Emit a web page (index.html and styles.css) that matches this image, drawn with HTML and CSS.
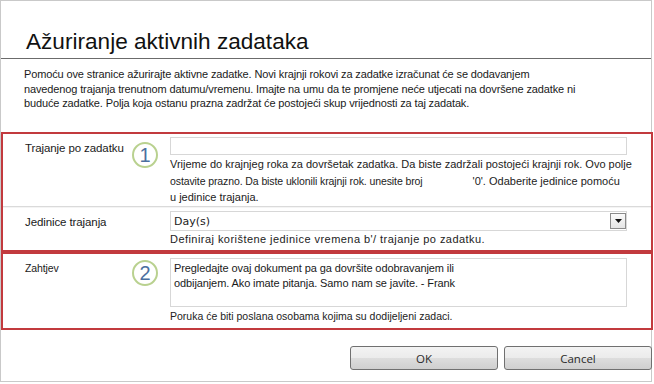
FILE: index.html
```html
<!DOCTYPE html>
<html>
<head>
<meta charset="utf-8">
<link rel="stylesheet" href="styles.css">
</head>
<body>
<div class="frame">
  <div class="header"><h1 class="title">Ažuriranje aktivnih zadataka</h1></div>
  <p class="intro">Pomoću ove stranice ažurirajte aktivne zadatke. Novi krajnji rokovi za zadatke izračunat će se dodavanjem<br>navedenog trajanja trenutnom datumu/vremenu. Imajte na umu da te promjene neće utjecati na dovršene zadatke ni<br>buduće zadatke. Polja koja ostanu prazna zadržat će postojeći skup vrijednosti za taj zadatak.</p>

  <div class="box box-one">
    <div class="row row-first">
      <div class="label">Trajanje po zadatku</div>
      <div class="badge"><span class="badge-num">1</span></div>
      <div class="field">
        <div class="input"></div>
        <div class="hint hint-multi">Vrijeme do krajnjeg roka za dovršetak zadatka. Da biste zadržali postojeći krajnji rok. Ovo polje<br><span class="small">ostavite prazno. Da biste uklonili krajnji rok. unesite broj</span><span class="gap"></span>'0'. Odaberite jedinice pomoću<br>u jedinice trajanja.</div>
      </div>
    </div>
    <div class="row row-second">
      <div class="label">Jedinice trajanja</div>
      <div class="badge"></div>
      <div class="field">
        <div class="select"><span class="select-text">Day(s)</span><span class="select-btn"><svg width="7" height="4" viewBox="0 0 7 4"><path d="M0 0H7L3.5 4Z" fill="#111"/></svg></span></div>
        <div class="hint hint-wide">Definiraj korištene jedinice vremena b'/ trajanje po zadatku.</div>
      </div>
    </div>
  </div>

  <div class="box box-two">
    <div class="row row-third">
      <div class="label label-small">Zahtjev</div>
      <div class="badge"><span class="badge-num">2</span></div>
      <div class="field">
        <div class="textarea">Pregledajte ovaj dokument pa ga dovršite odobravanjem ili<br>odbijanjem. Ako imate pitanja. Samo nam se javite. - Frank</div>
        <div class="hint hint-last">Poruka će biti poslana osobama kojima su dodijeljeni zadaci.</div>
      </div>
    </div>
  </div>

  <div class="buttons">
    <button class="btn btn-ok">OK</button>
    <button class="btn btn-cancel">Cancel</button>
  </div>
</div>
</body>
</html>
```

FILE: styles.css
```css
html, body {
  margin: 0;
  padding: 0;
  background: #ffffff;
}
body {
  width: 654px;
  height: 384px;
  overflow: hidden;
  font-family: "Liberation Sans", Arial, sans-serif;
  color: #1a1a1a;
}
.frame {
  width: 650px;
  height: 380px;
  border: 1px solid #c9c9c9;
  position: relative;
}
.header {
  border-bottom: 1px solid #6b6b6b;
  padding-left: 25px;
  box-sizing: border-box;
  height: 58px;
}
.title {
  margin: 0;
  padding-top: 27px;
  font-weight: normal;
  font-size: 22.6px;
  line-height: 28px;
  color: #111;
}
.intro {
  margin: 0;
  padding: 8px 0 0 23px;
  height: 64px;
  box-sizing: border-box;
  font-size: 11px;
  line-height: 14.5px;
  letter-spacing: -0.13px;
  color: #1a1a1a;
}
.box {
  width: 652px;
  box-sizing: border-box;
  border: 2px solid #c23a3e;
}
.box-one {
  margin-top: 9px;
}
.row {
  display: grid;
  grid-template-columns: 107px 60px 1fr;
}
.row-first {
  height: 73px;
  padding-top: 3px;
  box-sizing: border-box;
  border-bottom: 1px solid #dadada;
  box-shadow: 0 1px 0 #f4f4f4;
}
.row-second {
  padding-top: 4px;
  height: 43px;
  box-sizing: border-box;
}
.row-third {
  padding-top: 4px;
  height: 74px;
  box-sizing: border-box;
}
.label {
  padding-left: 22px;
  font-size: 11.5px;
  padding-top: 5px;
  white-space: nowrap;
  letter-spacing: -0.1px;
}
.label-small {
  font-size: 10.5px;
  padding-top: 4px;
}
.badge {
  display: flex;
  justify-content: center;
  align-items: flex-start;
  padding-top: 5px;
}
.row-third .badge {
  padding-top: 2px;
}
.badge-num {
  width: 22px;
  height: 22px;
  border: 2px solid #b9d18f;
  border-radius: 50%;
  display: flex;
  align-items: center;
  justify-content: center;
  font-size: 20px;
  line-height: 20px;
  color: #4b6fa0;
  margin-left: 10px;
}
.input {
  width: 457px;
  height: 18px;
  border: 1px solid #d7d7d7;
  box-sizing: border-box;
  background: #fff;
}
.hint {
  font-size: 11px;
  line-height: 16.5px;
  color: #222;
  white-space: nowrap;
}
.hint-multi {
  padding-top: 1px;
}
.hint-wide {
  letter-spacing: 0.45px;
}
.small {
  font-size: 10.5px;
  letter-spacing: -0.1px;
}
.gap {
  display: inline-block;
  width: 50px;
}
.select {
  width: 457px;
  height: 20px;
  border: 1px solid #d7d7d7;
  box-sizing: border-box;
  display: flex;
  align-items: center;
  justify-content: space-between;
  padding: 0 0 0 3px;
}
.select-text {
  font-family: "DejaVu Sans", sans-serif;
  font-size: 11px;
  color: #222;
}
.select-btn {
  width: 16px;
  height: 16px;
  box-sizing: border-box;
  border: 1px solid #8a8a8a;
  background: linear-gradient(#fafafa, #e4e4e4);
  display: flex;
  align-items: center;
  justify-content: center;
}
.textarea {
  width: 457px;
  height: 49px;
  border: 1px solid #d7d7d7;
  box-sizing: border-box;
  padding: 2px 0 0 3px;
  font-size: 11px;
  line-height: 15px;
  letter-spacing: -0.1px;
  color: #1a1a1a;
  white-space: nowrap;
}
.hint-last {
  padding-top: 1px;
  font-size: 10.5px;
}
.buttons {
  display: flex;
  justify-content: flex-end;
  gap: 6px;
  padding: 16px 0 0 0;
  margin-right: -1px;
}
.btn {
  width: 148px;
  height: 24px;
  border: 1px solid #707070;
  border-radius: 3px;
  background: linear-gradient(#f3f3f3 0%, #ebebeb 50%, #dddddd 51%, #cfcfcf 100%);
  font-family: "Open Sans", sans-serif;
  font-size: 11.5px;
  color: #2a2a2a;
  padding: 0;
}
```
